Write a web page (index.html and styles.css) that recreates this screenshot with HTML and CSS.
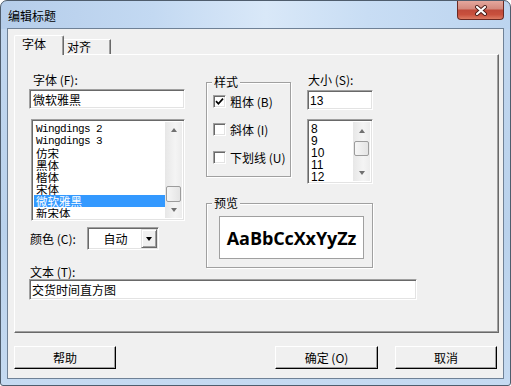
FILE: index.html
```html
<!DOCTYPE html>
<html lang="zh-CN">
<head>
<meta charset="utf-8">
<title>编辑标题</title>
<link rel="stylesheet" href="styles.css">
</head>
<body>
<div class="window">
  <div class="titlebar">
    <span class="title">编辑标题</span>
    <div class="close">
      <svg width="14" height="11" viewBox="0 0 14 11">
        <path d="M3 2 L11 9 M11 2 L3 9" stroke="#4a1d18" stroke-width="4" stroke-linecap="round"/>
        <path d="M3 2 L11 9 M11 2 L3 9" stroke="#ffffff" stroke-width="2.2" stroke-linecap="round"/>
      </svg>
    </div>
  </div>
  <div class="client">
    <div class="tabs">
      <div class="tab active">字体</div>
      <div class="tab">对齐</div>
    </div>
    <div class="panel">
      <div class="top">
        <div class="col-left">
          <div class="label font-label">字体 (F):</div>
          <div class="field font-name">微软雅黑</div>
          <div class="listbox fontlist">
            <div class="items">
              <div class="item mono">Wingdings 2</div>
              <div class="item mono">Wingdings 3</div>
              <div class="item cjk">仿宋</div>
              <div class="item cjk">黑体</div>
              <div class="item cjk">楷体</div>
              <div class="item cjk">宋体</div>
              <div class="item cjk selected">微软雅黑</div>
              <div class="item cjk">新宋体</div>
            </div>
            <div class="scrollbar">
              <div class="sb-btn"><span class="arrow-up"></span></div>
              <div class="sb-track"><div class="thumb"></div></div>
              <div class="sb-btn"><span class="arrow-down"></span></div>
            </div>
          </div>
          <div class="color-row">
            <span class="label color-label">颜色 (C):</span>
            <div class="combo">
              <span class="combo-value">自动</span>
              <span class="combo-btn"><span class="combo-arrow"></span></span>
            </div>
          </div>
          <div class="label text-label">文本 (T):</div>
        </div>
        <div class="col-right">
          <div class="upper">
            <div class="group style-group">
              <span class="legend">样式</span>
              <div class="check">
                <span class="box">
                  <svg width="9" height="9" viewBox="0 0 9 9"><path d="M1 4.2 L3.4 6.8 L8 1.6" fill="none" stroke="#000" stroke-width="1.7"/></svg>
                </span>
                <span>粗体 (B)</span>
              </div>
              <div class="check"><span class="box"></span><span>斜体 (I)</span></div>
              <div class="check"><span class="box"></span><span>下划线 (U)</span></div>
            </div>
            <div class="size-col">
              <div class="label size-label">大小 (S):</div>
              <div class="field size-field">13</div>
              <div class="listbox sizelist">
                <div class="items">
                  <div class="item num">8</div>
                  <div class="item num">9</div>
                  <div class="item num">10</div>
                  <div class="item num">11</div>
                  <div class="item num">12</div>
                </div>
                <div class="scrollbar">
                  <div class="sb-btn"><span class="arrow-up"></span></div>
                  <div class="sb-track"><div class="thumb"></div></div>
                  <div class="sb-btn"><span class="arrow-down"></span></div>
                </div>
              </div>
            </div>
          </div>
          <div class="group preview-group">
            <span class="legend">预览</span>
            <div class="preview">AaBbCcXxYyZz</div>
          </div>
        </div>
      </div>
      <div class="field text-field">交货时间直方图</div>
    </div>
    <div class="buttons">
      <div class="btn">帮助</div>
      <div class="btn ok">确定 (O)</div>
      <div class="btn">取消</div>
    </div>
  </div>
</div>
</body>
</html>
```

FILE: styles.css
```css
* { box-sizing: border-box; }

html, body {
  margin: 0;
  padding: 0;
  background: #ffffff;
}

body {
  font-family: "Noto Sans CJK SC", "Noto Sans", sans-serif;
  font-size: 12px;
  line-height: 14px;
  color: #000;
}

.window {
  width: 511px;
  height: 386px;
  display: flex;
  flex-direction: column;
  border: 1px solid #4f5d6d;
  border-radius: 7px 7px 3px 3px;
  padding: 0 6px 6px 6px;
  overflow: hidden;
  background:
    linear-gradient(90deg, #b5cdea 0%, #c3d9f2 30%, #d9e8f8 52%, #c8ddf4 72%, #bcd4ef 100%) top left / 100% 28px no-repeat,
    linear-gradient(180deg, #c2d7ef 0%, #bad2ec 60%, #c5daf1 100%);
}

/* Title bar */
.titlebar {
  height: 27px;
  display: flex;
  align-items: flex-start;
  flex-shrink: 0;
}

.title {
  margin-top: 8px;
  padding-left: 1px;
  line-height: 14px;
  color: #000;
}

.close {
  margin-left: auto;
  width: 47px;
  height: 19px;
  border: 1px solid #6b2a23;
  border-top: none;
  border-radius: 0 0 4px 4px;
  background: linear-gradient(180deg, #e4a79d 0%, #d48a7e 42%, #c04a3a 52%, #c8503d 75%, #dc7a62 100%);
  display: flex;
  align-items: center;
  justify-content: center;
}

/* Client area */
.client {
  flex: 1;
  border: 1px solid #6f8196;
  background: #f0f0f0;
  padding: 6px 4px 0 6px;
  display: flex;
  flex-direction: column;
}

.tabs {
  height: 19px;
  display: flex;
  align-items: flex-end;
  position: relative;
  z-index: 1;
}

.tab {
  background: #f0f0f0;
  border: 1px solid;
  border-color: #ffffff #696969 transparent #ffffff;
  border-bottom: none;
  line-height: 14px;
}

.tab.active {
  width: 50px;
  height: 20px;
  margin-bottom: -1px;
  padding: 1px 0 0 7px;
  border-radius: 2px 2px 0 0;
  box-shadow: inset -1px 0 #a0a0a0;
}

.tab:not(.active) {
  width: 47px;
  height: 15px;
  padding: 0 0 0 3px;
  border-left: none;
  box-shadow: inset -1px 0 #a0a0a0;
}

.panel {
  height: 279px;
  border: 1px solid;
  border-color: #ffffff #696969 #696969 #ffffff;
  box-shadow: inset -1px -1px #a0a0a0;
  padding: 17px 0 0 14px;
}

.top {
  display: flex;
  align-items: flex-start;
}

.col-left {
  width: 156px;
  margin-right: 21px;
  display: flex;
  flex-direction: column;
}

.label {
  height: 15px;
  line-height: 15px;
  white-space: nowrap;
}

.font-label { padding-left: 4px; }
.size-label { padding-left: 1px; }

/* Sunken fields */
.field,
.listbox,
.combo {
  background: #ffffff;
  border: 1px solid;
  border-color: #a0a0a0 #ffffff #ffffff #a0a0a0;
  box-shadow: inset 1px 1px #696969, inset -1px -1px #e3e3e3;
}

.field {
  height: 20px;
  padding: 2px 0 0 3px;
  line-height: 16px;
  white-space: nowrap;
}

.font-name { margin-top: 2px; }

.listbox {
  display: flex;
  padding: 2px;
}

.fontlist {
  margin-top: 10px;
  margin-left: 2px;
  width: 154px;
  height: 102px;
}

.items {
  flex: 1;
  padding-top: 1px;
  overflow: hidden;
}

.item {
  height: 12px;
  line-height: 12px;
  padding-left: 2px;
  white-space: nowrap;
}

.item.cjk {
  font-size: 11.5px;
}

.item.mono {
  font-family: "Liberation Mono", monospace;
  font-size: 11px;
  letter-spacing: -0.6px;
}

.item.num {
  font-family: "Liberation Sans", sans-serif;
  font-size: 12px;
  padding-left: 1px;
}

.item.selected {
  background: #3399ff;
  color: #ffffff;
}

/* Scrollbar */
.scrollbar {
  width: 17px;
  display: flex;
  flex-direction: column;
  background: linear-gradient(90deg, #e7e7e7, #f4f4f4 60%, #ececec);
}

.sb-btn {
  height: 17px;
  display: flex;
  align-items: center;
  justify-content: center;
}

.arrow-up,
.arrow-down {
  width: 0;
  height: 0;
  border-left: 3.5px solid transparent;
  border-right: 3.5px solid transparent;
}

.arrow-up { border-bottom: 4px solid #707070; }
.arrow-down { border-top: 4px solid #707070; }

.sb-track { flex: 1; }

.thumb {
  width: 15px;
  height: 16px;
  margin-left: 1px;
  border: 1px solid #9c9c9c;
  border-radius: 2px;
  background: linear-gradient(90deg, #f6f6f6, #e4e4e4);
}

.fontlist .thumb { margin-top: 47px; }
.sizelist .thumb { margin-top: 2px; height: 15px; }

/* Color row */
.color-row {
  margin-top: 6px;
  display: flex;
  align-items: center;
}

.color-label {
  width: 58px;
  padding-left: 1px;
}

.combo {
  width: 72px;
  height: 23px;
  display: flex;
  align-items: center;
  padding: 2px 1px 2px 2px;
}

.combo-value {
  flex: 1;
  text-align: center;
  line-height: 14px;
}

.combo-btn {
  width: 16px;
  height: 19px;
  background: #f0f0f0;
  border: 1px solid;
  border-color: #e3e3e3 #696969 #696969 #e3e3e3;
  box-shadow: inset 1px 1px #ffffff, inset -1px -1px #a0a0a0;
  display: flex;
  align-items: center;
  justify-content: center;
}

.combo-arrow {
  width: 0;
  height: 0;
  border-left: 3.5px solid transparent;
  border-right: 3.5px solid transparent;
  border-top: 4px solid #000;
}

.text-label {
  margin-top: 14px;
  padding-left: 1px;
}

.text-field {
  width: 388px;
  height: 21px;
  padding-left: 2px;
}

/* Right column */
.col-right {
  width: 167px;
  display: flex;
  flex-direction: column;
}

.upper {
  display: flex;
  align-items: flex-start;
  gap: 16px;
}

.group {
  position: relative;
  border: 1px solid #a0a0a0;
  box-shadow: inset 1px 1px #ffffff, 1px 1px #ffffff;
}

.legend {
  position: absolute;
  top: -8px;
  left: 5px;
  padding: 0 2px;
  background: #f0f0f0;
  line-height: 14px;
}

.style-group {
  width: 85px;
  height: 95px;
  margin-top: 10px;
  padding: 12px 0 0 6px;
  display: flex;
  flex-direction: column;
  gap: 15px;
}

.check {
  height: 13px;
  display: flex;
  align-items: center;
  gap: 4px;
  white-space: nowrap;
  line-height: 13px;
}

.box {
  width: 13px;
  height: 13px;
  flex-shrink: 0;
  background: #ffffff;
  border: 1px solid;
  border-color: #a0a0a0 #ffffff #ffffff #a0a0a0;
  box-shadow: inset 1px 1px #696969, inset -1px -1px #e3e3e3;
  display: flex;
  align-items: center;
  justify-content: center;
}

.size-col {
  width: 66px;
  display: flex;
  flex-direction: column;
}

.size-field {
  margin-top: 3px;
  font-family: "Liberation Sans", sans-serif;
  padding-left: 2px;
}

.sizelist {
  margin-top: 9px;
  height: 65px;
}

.preview-group {
  margin-top: 19px;
  height: 65px;
  padding: 12px 0 0 12px;
}

.preview {
  width: 145px;
  height: 43px;
  background: #ffffff;
  border: 1px solid #a0a0a0;
  display: flex;
  align-items: center;
  justify-content: center;
  font-family: "Open Sans", "Noto Sans", sans-serif;
  font-weight: 700;
  font-size: 18px;
  letter-spacing: -0.1px;
}

/* Buttons */
.buttons {
  margin-top: 13px;
  display: flex;
  padding-right: 2px;
  gap: 17px;
}

.btn {
  width: 102px;
  height: 23px;
  background: #f0f0f0;
  border: 1px solid;
  border-color: #ffffff #000000 #000000 #ffffff;
  box-shadow: inset -1px -1px #a0a0a0;
  display: flex;
  align-items: center;
  justify-content: center;
  line-height: 14px;
}

.btn.ok {
  margin-left: auto;
  width: 103px;
}
```
